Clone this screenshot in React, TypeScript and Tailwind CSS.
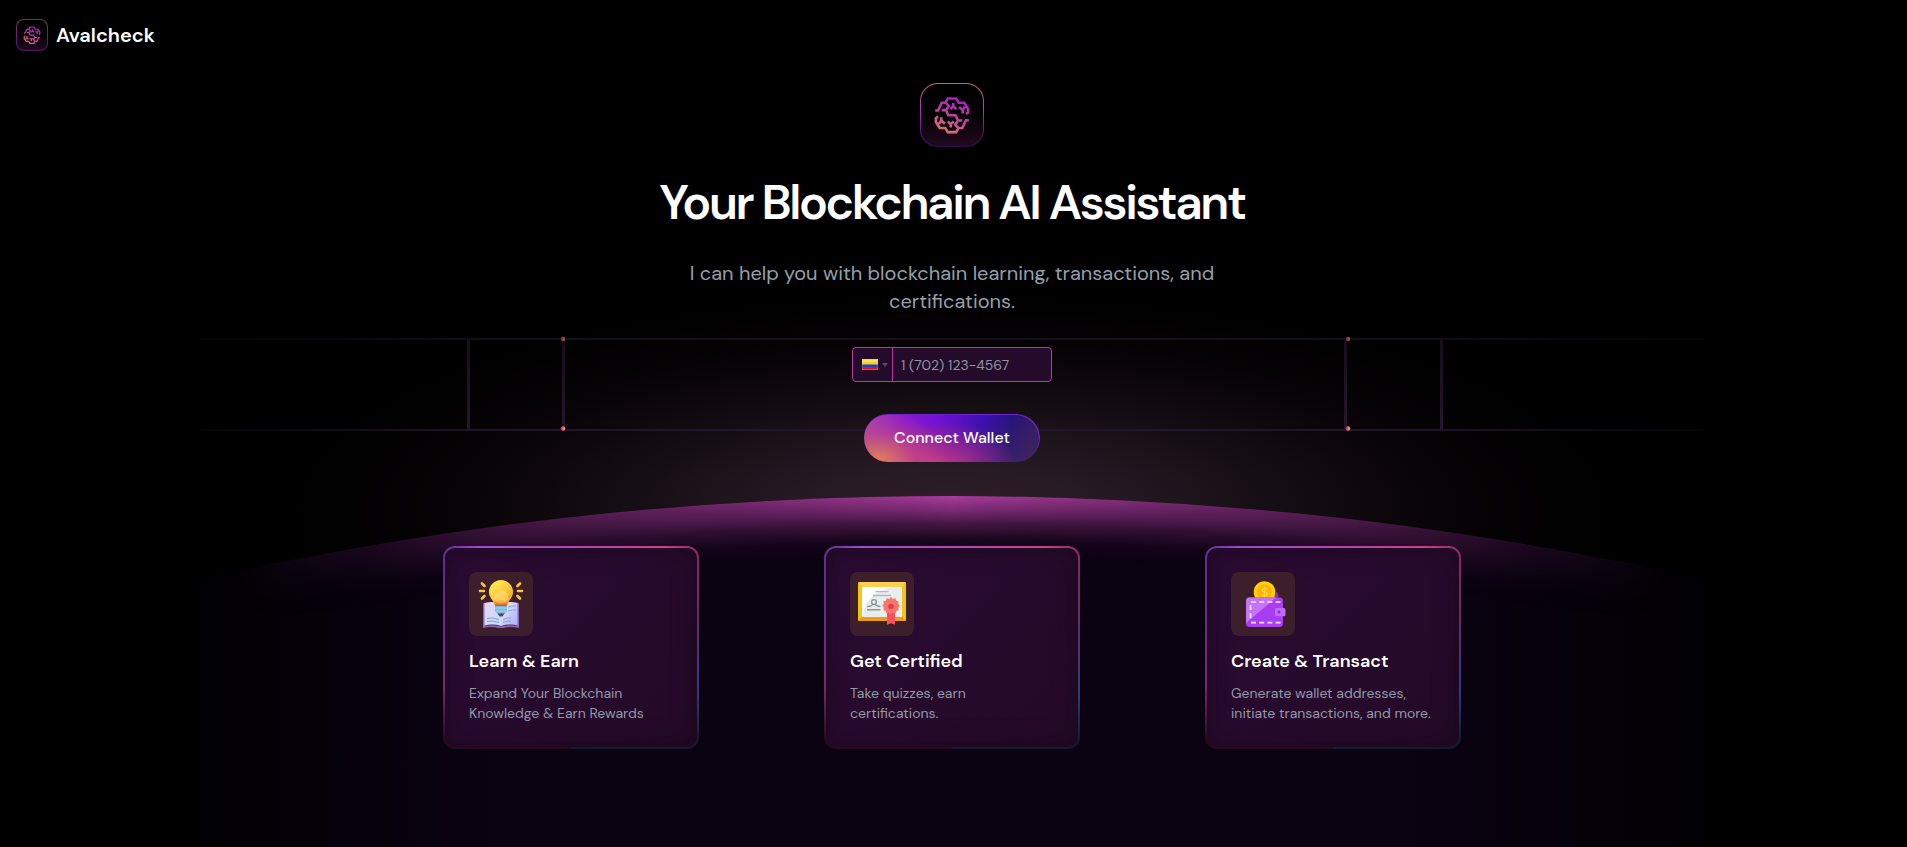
import React from "react";

function BrainMark({ className, id }: { className: string; id: string }) {
  return (
    <svg viewBox="60 39 192 192" className={className} fill="none" aria-hidden="true">
      <defs>
        <linearGradient id={id} gradientUnits="userSpaceOnUse" x1="180" y1="90" x2="140" y2="188">
          <stop offset="0" stopColor="#a91fc0" />
          <stop offset="0.5" stopColor="#bb459e" />
          <stop offset="1" stopColor="#d4736c" />
        </linearGradient>
      </defs>
      <path
        stroke={`url(#${id})`}
        strokeWidth="8"
        d="M104 121H113L124 97H136L143 84H169L177 97H194L206 116V127L199 132M124 120H137L145 136H158M137 120L146 108L137 97M160 98V108L151 117M160 108L169 117M189 130V120L178 110M189 120L196 109M208 151H199L188 175H176L169 188H143L135 175H118L106 156V145L113 140M188 152H175L167 136H154M175 152L166 164L175 175M152 174V164L161 155M152 164L143 155M123 142V152L134 162M123 152L116 163"
      />
    </svg>
  );
}

function Logo({ large, id }: { large?: boolean; id: string }) {
  return large ? (
    <div className="rounded-[18px] bg-linear-to-b from-[#c9685f] via-[#a526b8] via-50% to-[#2a0f45] p-px">
      <div className="rounded-[17px] bg-linear-to-b from-black to-[#220a20]">
        <BrainMark id={id} className="size-[62px]" />
      </div>
    </div>
  ) : (
    <div className="rounded-lg bg-linear-to-b from-[#6f3a42] via-[#6c2173] via-50% to-[#4a1a5c] p-px">
      <div className="rounded-[7px] bg-linear-to-b from-black to-[#220a20]">
        <BrainMark id={id} className="size-[30px]" />
      </div>
    </div>
  );
}

function Backdrop() {
  return (
    <svg
      viewBox="0 0 1504 2000"
      className="pointer-events-none absolute left-1/2 top-0 h-[2000px] w-[1504px] max-w-none -translate-x-1/2"
      aria-hidden="true"
    >
      <defs>
        <radialGradient id="halo" gradientUnits="userSpaceOnUse" cx="0" cy="0" r="1" gradientTransform="translate(752 510) scale(660 215)">
          <stop offset="0" stopColor="#2f1f2a" />
          <stop offset="0.25" stopColor="#241922" />
          <stop offset="0.5" stopColor="#150d14" />
          <stop offset="0.75" stopColor="#070306" />
          <stop offset="1" stopColor="#000000" />
        </radialGradient>
        <radialGradient id="rim" gradientUnits="userSpaceOnUse" cx="752" cy="3936" r="3440">
          <stop offset="0.982" stopColor="#a33a96" stopOpacity="0" />
          <stop offset="0.987" stopColor="#a33a96" stopOpacity="0.08" />
          <stop offset="0.992" stopColor="#a33a96" stopOpacity="0.38" />
          <stop offset="0.996" stopColor="#a33a96" stopOpacity="0.75" />
          <stop offset="1" stopColor="#aa3c9c" stopOpacity="1" />
        </radialGradient>
        <linearGradient id="rimFade" x1="0" x2="1" y1="0" y2="0">
          <stop offset="0.02" stopColor="#fff" stopOpacity="0" />
          <stop offset="0.12" stopColor="#fff" stopOpacity="0.13" />
          <stop offset="0.28" stopColor="#fff" stopOpacity="0.5" />
          <stop offset="0.5" stopColor="#fff" stopOpacity="1" />
          <stop offset="0.72" stopColor="#fff" stopOpacity="0.5" />
          <stop offset="0.88" stopColor="#fff" stopOpacity="0.13" />
          <stop offset="0.98" stopColor="#fff" stopOpacity="0" />
        </linearGradient>
        <linearGradient id="ground" x1="0" x2="1" y1="0" y2="0">
          <stop offset="0" stopColor="#010002" />
          <stop offset="0.06" stopColor="#040108" />
          <stop offset="0.2" stopColor="#0b0212" />
          <stop offset="0.8" stopColor="#0b0212" />
          <stop offset="0.94" stopColor="#040108" />
          <stop offset="1" stopColor="#010002" />
        </linearGradient>
        <linearGradient id="wire" gradientUnits="userSpaceOnUse" x1="0" x2="1504" y1="0" y2="0">
          <stop offset="0" stopColor="#231730" stopOpacity="0.2" />
          <stop offset="0.2" stopColor="#231730" stopOpacity="1" />
          <stop offset="0.8" stopColor="#231730" stopOpacity="1" />
          <stop offset="1" stopColor="#231730" stopOpacity="0.2" />
        </linearGradient>
        <linearGradient id="post" gradientUnits="userSpaceOnUse" x1="0" x2="0" y1="338" y2="430">
          <stop offset="0" stopColor="#170d1d" />
          <stop offset="1" stopColor="#24162e" />
        </linearGradient>
        <linearGradient id="node">
          <stop offset="0.35" stopColor="#e0405f" />
          <stop offset="0.65" stopColor="#e8965c" />
        </linearGradient>
        <mask id="rimMask" maskUnits="userSpaceOnUse" x="0" y="480" width="1504" height="400">
          <rect x="0" y="480" width="1504" height="400" fill="url(#rimFade)" />
        </mask>
        <clipPath id="dome">
          <circle cx="752" cy="3936" r="3440" />
        </clipPath>
      </defs>
      <rect x="0" y="290" width="1504" height="440" fill="url(#halo)" />
      <g fill="url(#wire)">
        <rect x="0" y="338" width="1504" height="2" opacity="0.55" />
        <rect x="0" y="429" width="1504" height="2" opacity="0.9" />
      </g>
      <g fill="url(#post)">
        <rect x="267" y="340" width="3" height="89" />
        <rect x="362" y="340" width="3" height="89" />
        <rect x="1144" y="340" width="3" height="89" />
        <rect x="1240" y="340" width="3" height="89" />
      </g>
      <g fill="url(#node)">
        <circle cx="363" cy="339" r="2.2" opacity="0.6" />
        <circle cx="363" cy="428.5" r="2.3" />
        <circle cx="1148" cy="339" r="2.2" opacity="0.6" />
        <circle cx="1148" cy="428.5" r="2.3" />
      </g>
      <g clipPath="url(#dome)">
        <rect x="0" y="480" width="1504" height="1520" fill="url(#ground)" />
        <rect x="0" y="480" width="1504" height="400" fill="url(#rim)" mask="url(#rimMask)" />
      </g>
    </svg>
  );
}

function LearnIcon() {
  return (
    <svg viewBox="0 0 48 48" className="size-12" aria-hidden="true">
      <defs>
        <linearGradient id="bulb" x1="0.2" y1="0" x2="0.9" y2="1">
          <stop offset="0.2" stopColor="#ffe04a" />
          <stop offset="1" stopColor="#fb9b1c" />
        </linearGradient>
        <linearGradient id="neck" x1="0" y1="0" x2="0" y2="1">
          <stop offset="0" stopColor="#fba32a" stopOpacity="0" />
          <stop offset="1" stopColor="#d4491c" />
        </linearGradient>
        <linearGradient id="pageL" x1="0" y1="0" x2="1" y2="1">
          <stop offset="0" stopColor="#e9d3f6" />
          <stop offset="1" stopColor="#c4defa" />
        </linearGradient>
        <linearGradient id="pageR" x1="0" y1="0" x2="1" y2="1">
          <stop offset="0" stopColor="#f4eaf4" />
          <stop offset="1" stopColor="#a9b0f3" />
        </linearGradient>
      </defs>
      <path d="M6 24q0-1.500 2-1.500V46q8-1.500 16 .5 8-2 16-.5V22.500q2 0 2 1.500V48q-9-2-15.500 0h-5Q15 46 6 48Z" fill="#8e62c4" />
      <path d="M7.500 23q9-2.500 16.500 1v22q-8-2.500-16.500-.5Z" fill="url(#pageL)" />
      <path d="M24 24q8-3.500 16.500-1v22.500q-8.500-2-16.500.5Z" fill="url(#pageR)" />
      <g fill="none" stroke="#74a8e0" strokeWidth="1">
        <path d="M10 38.500q6-1.500 12 1M10 41.500q6-1.500 12 1M26 39.500q4-2 8-1.500M26 42.500q5-2 8-1.500M31 27q4-1.500 8-1M31 31q4-1.500 8-1" />
      </g>
      <path d="M18 25h12v6l-2.500 3h-7L18 31Z" fill="#7db8dd" />
      <path d="M18 28h12M18.500 31h11" stroke="#a8d4ee" strokeWidth="1" />
      <path d="M20.500 33.500h7l-2 3h-3Z" fill="#4a4a50" />
      <path d="M24 0a12 12 0 0 1 12 12c0 6-5 8.500-6 14H18c-1-5.500-6-8-6-14A12 12 0 0 1 24 0Z" fill="url(#bulb)" />
      <circle cx="24" cy="17" r="7" fill="#ffe07a" opacity="0.6" />
      <path d="M15.500 19h17c-1.300 2.200-2.200 4-2.500 7H18c-.3-3-1.200-4.800-2.500-7Z" fill="url(#neck)" />
      <g stroke="#fbc53a" strokeWidth="2.600" strokeLinecap="round">
        <path d="M3 11H7M41 11h4M5 3.500l2.500 2.500M5 18.500l2.500-2.500M43 3.500l-2.500 2.500M43 18.500l-2.500-2.500" />
      </g>
    </svg>
  );
}

function CertificateIcon() {
  return (
    <svg viewBox="0 0 48 48" className="size-12" aria-hidden="true">
      <rect x="0" y="2" width="48" height="39" rx="1.200" fill="#f4c413" />
      <path d="M.5 2h47L44 7H4Z" fill="#f9cf52" />
      <path d="M.5 41h47L44 36H4Z" fill="#f09a1c" />
      <rect x="4" y="7" width="40" height="30" fill="#e9edee" />
      <path d="M4 7h31C18 10 6 20 5 37H4Z" fill="#fff" />
      <path d="M17.500 11.700h13M15 15.500h18" stroke="#b3bbbf" strokeWidth="1.300" />
      <g fill="none" stroke="#87979a" strokeWidth="1.400">
        <circle cx="16" cy="22" r="2.400" />
        <path d="M9 26.500q4.500 0 6-2.500M17 24q1.500 2.500 5.500 2.500M9 29.800h13.500" />
      </g>
      <path d="M29 31h8v13.800l-4-1.500-4 1.500Z" fill="#fb4f60" />
      <path d="m33 19.500 2 2 2.800-.8.800 2.800 2.800.8-.8 2.700 2 2-2 2 .8 2.800-2.800.8-.8 2.700-2.800-.8-2 2-2-2-2.800.8-.8-2.700-2.800-.8.800-2.800-2-2 2-2-.8-2.700 2.800-.8.800-2.800 2.800.8Z" transform="translate(2.500 -1) scale(.925)" fill="#fb7468" />
      <circle cx="33" cy="26.500" r="2.800" fill="#dd4254" />
    </svg>
  );
}

function WalletIcon() {
  return (
    <svg viewBox="0 0 48 48" className="size-12" aria-hidden="true">
      <path d="M33 18V15l3-1 2-2q2.500 3 .5 7Z" fill="#8f2ad6" />
      <circle cx="25.500" cy="12" r="10.800" fill="#ffd005" />
      <circle cx="25.500" cy="12" r="7.600" fill="#fdb504" />
      <path d="M28.100 9.800q-.6-1.500-2.600-1.500-2.400 0-2.400 1.700 0 1.500 2.400 1.900 2.600.4 2.600 2.100 0 1.800-2.600 1.800-2.200 0-2.700-1.600M25.500 6.800v10.400" fill="none" stroke="#ffd83a" strokeWidth="1.300" />
      <rect x="7" y="17.500" width="37" height="29.500" rx="3.500" fill="#a93df0" />
      <path d="M10.500 17.500H37L7 43V21q0-3.500 3.500-3.500Z" fill="#c574f8" />
      <g fill="none" stroke="#fbeaff" strokeWidth="1.700" strokeDasharray="5 3.200">
        <path d="M12 22H41.500M12 42.700H41.500" />
        <path d="M11.500 25v16" />
      </g>
      <rect x="36" y="28" width="10.500" height="8.200" rx="1.500" fill="#c06bf7" />
      <circle cx="40" cy="32" r="1.500" fill="#8f2ad6" />
    </svg>
  );
}

const features = [
  { title: "Learn & Earn", text: "Expand Your Blockchain Knowledge & Earn Rewards", Icon: LearnIcon },
  { title: "Get Certified", text: "Take quizzes, earn certifications.", Icon: CertificateIcon },
  { title: "Create & Transact", text: "Generate wallet addresses, initiate transactions, and more.", Icon: WalletIcon },
];

function Flag() {
  return (
    <svg viewBox="0 0 16 11" className="h-[11px] w-4" aria-hidden="true">
      <rect width="16" height="11" fill="#e8101c" />
      <rect width="16" height="8" fill="#1a3fc4" />
      <rect width="16" height="5.500" fill="#f7cf1c" />
      <rect x="1" y="1" width="14" height="2" fill="#fff" opacity="0.3" />
      <rect x="0.500" y="0.500" width="15" height="10" fill="none" stroke="#fff" strokeOpacity="0.2" />
    </svg>
  );
}

export default function App() {
  return (
    <div className="relative min-h-screen overflow-hidden bg-black pr-[3px] font-['DM_Sans',Inter,sans-serif] text-white">
      <div className="relative">
        <Backdrop />
        <header className="relative flex h-[70px] items-center px-4">
          <a href="#home" className="flex items-center gap-2">
            <Logo id="mark-small" />
            <span className="text-xl font-semibold">Avalcheck</span>
          </a>
        </header>

        <main className="relative flex flex-col items-center px-4 pb-24 pt-[13px]">
          <Logo large id="mark-large" />
          <h1 className="mt-8 text-center text-5xl font-semibold tracking-tighter">Your Blockchain AI Assistant</h1>
          <p className="mt-8 max-w-xl text-center text-xl text-[#94a0ad]">
            I can help you with blockchain learning, transactions, and certifications.
          </p>

          <form className="mt-8 flex flex-col items-center gap-8" onSubmit={(e) => e.preventDefault()}>
            <div className="flex h-[35px] w-[200px] overflow-hidden rounded border border-[#b83a9c] bg-[#250b2a]">
              <button type="button" aria-label="Country: Colombia" className="flex w-10 shrink-0 items-center justify-center gap-1 border-r border-[#b83a9c] pl-1">
                <Flag />
                <svg viewBox="0 0 6 4" className="h-1 w-1.5" aria-hidden="true">
                  <path d="M0 0h6L3 4Z" fill="#5a4c5e" />
                </svg>
              </button>
              <input
                type="tel"
                aria-label="Phone number"
                placeholder="1 (702) 123-4567"
                className="w-full min-w-0 bg-transparent px-2 text-sm text-white outline-none placeholder:text-[#9096a4]"
              />
            </div>
            <button
              type="submit"
              className="h-12 w-44 rounded-full bg-[radial-gradient(ellipse_40%_110%_at_8%_100%,#e8825c_0%,#d8508080_55%,transparent_100%),radial-gradient(ellipse_45%_95%_at_42%_110%,#c8388a_0%,#b02e8ab0_45%,transparent_100%),linear-gradient(180deg,transparent_10%,#50305666_100%),linear-gradient(97deg,#a040b8_0%,#8a18d0_22%,#7410d8_40%,#3c10b0_66%,#281478_82%,#38205a_100%)] text-base font-medium shadow-[inset_-1px_1px_0_#7024d0]"
            >
              Connect Wallet
            </button>
          </form>

          <section className="mt-[84px] flex w-full max-w-[1018px] flex-wrap justify-center gap-8 lg:justify-between">
            {features.map(({ title, text, Icon }) => (
              <article
                key={title}
                className="w-64 rounded-xl bg-[linear-gradient(90deg,#5c3090_0%,#a048d0_14%,#b444b0_50%,#cc4088_86%,#8c2860_100%),linear-gradient(180deg,#5c3090_0%,#6a2c80_45%,#7a2864_70%,#240c18_96%),linear-gradient(180deg,#8c2860_0%,#5c3068_40%,#303c78_72%,#101c30_96%)] bg-[length:100%_10px,50%_100%,50%_100%] bg-[position:0_0,0_0,100%_0] bg-no-repeat p-0.5"
              >
                <div className="rounded-[10px] bg-[linear-gradient(135deg,#2a0b33,#230a26)] p-6 shadow-[inset_0_0_24px_#15061899]">
                  <div className="flex size-16 items-center justify-center rounded-lg bg-[#3c1f2b]">
                    <Icon />
                  </div>
                  <h2 className="mt-3 text-lg leading-[27px] font-semibold">{title}</h2>
                  <p className="mt-2 text-sm text-[#9299a8]">{text}</p>
                </div>
              </article>
            ))}
          </section>
        </main>
      </div>
    </div>
  );
}
